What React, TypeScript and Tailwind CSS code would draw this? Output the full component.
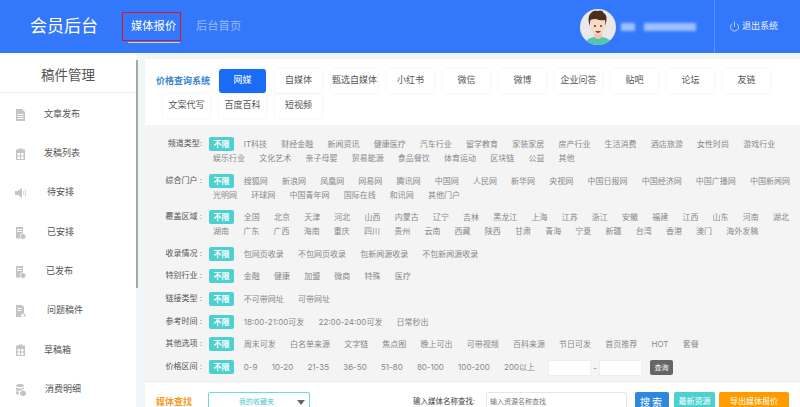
import { Power } from "lucide-react";

type Row = { label: string; items: string[] };

const tabsTop = ["网媒", "自媒体", "甄选自媒体", "小红书", "微信", "微博", "企业问答", "贴吧", "论坛", "友链"];
const tabsBottom = ["文案代写", "百度百科", "短视频"];

const rows: Row[] = [
  { label: "频道类型:", items: ["IT科技", "财经金融", "新闻资讯", "健康医疗", "汽车行业", "留学教育", "家装家居", "房产行业", "生活消费", "酒店旅游", "女性时尚", "游戏行业", "娱乐行业", "文化艺术", "亲子母婴", "贸易能源", "食品餐饮", "体育运动", "区块链", "公益", "其他"] },
  { label: "综合门户 :", items: ["搜狐网", "新浪网", "凤凰网", "网易网", "腾讯网", "中国网", "人民网", "新华网", "央视网", "中国日报网", "中国经济网", "中国广播网", "中国新闻网", "光明网", "环球网", "中国青年网", "国际在线", "和讯网", "其他门户"] },
  { label: "覆盖区域 :", items: ["全国", "北京", "天津", "河北", "山西", "内蒙古", "辽宁", "吉林", "黑龙江", "上海", "江苏", "浙江", "安徽", "福建", "江西", "山东", "河南", "湖北", "湖南", "广东", "广西", "海南", "重庆", "四川", "贵州", "云南", "西藏", "陕西", "甘肃", "青海", "宁夏", "新疆", "台湾", "香港", "澳门", "海外发稿"] },
  { label: "收录情况 :", items: ["包网页收录", "不包网页收录", "包新闻源收录", "不包新闻源收录"] },
  { label: "特别行业 :", items: ["金融", "健康", "加盟", "微商", "特殊", "医疗"] },
  { label: "链接类型 :", items: ["不可带网址", "可带网址"] },
  { label: "参考时间 :", items: ["18:00-21:00可发", "22:00-24:00可发", "日常秒出"] },
  { label: "其他选项 :", items: ["周末可发", "白名单来源", "文字链", "焦点图", "晚上可出", "可带视频", "百科来源", "节日可发", "首页推荐", "HOT", "套餐"] },
  { label: "价格区间 :", items: ["0-9", "10-20", "21-35", "36-50", "51-80", "80-100", "100-200", "200以上"] },
];

const menu = [
  { name: "文章发布", icon: "doc", indent: "ml-[18px]" },
  { name: "发稿列表", icon: "grid", indent: "ml-[18px]" },
  { name: "待安排", icon: "horn", indent: "ml-[21px]" },
  { name: "已安排", icon: "check", indent: "ml-[21px]" },
  { name: "已发布", icon: "check", indent: "ml-[20px]" },
  { name: "问题稿件", icon: "issue", indent: "ml-[21px]" },
  { name: "草稿箱", icon: "grid", indent: "ml-[18px]" },
  { name: "消费明细", icon: "coin", indent: "ml-[19px]" },
];

function MenuIcon({ kind }: { kind: string }) {
  return (
    <svg width="11" height="12" viewBox="0 0 11 12" className="shrink-0" fill="#c4c4c4">
      {kind === "doc" && <path d="M1 0h6l3 3v9H1zM2.5 5v1h6V5zm0 2v1h6V7zm0 2v1h6V9z" fillRule="evenodd" />}
      {kind === "grid" && <path d="M1 1.500h2.500V.5h4v1H10V12H1zM2.500 5v2.500h2.500V5zm3.500 0v2.500h2.500V5zM2.500 8.500V11h2.500V8.500zm3.500 0V11h2.500V8.500z" fillRule="evenodd" />}
      {kind === "horn" && <path d="M0 4h3l4-3v10L3 8H0zM8 4.500q1 1.500 0 3l.6.400q1.200-1.900 0-3.800zM9.500 3q2 3 0 6l.6.400q2.200-3.400 0-6.800z" />}
      {kind === "check" && <path d="M1 0h7v6.200A3 3 0 0 0 5 9.500q0 1 .5 2H1zM2 2v1h5V2zm0 2v1h5V4zM8 7a2.500 2.500 0 1 1 0 5 2.500 2.500 0 0 1 0-5z" fillRule="evenodd" />}
      {kind === "issue" && <path d="M1 0h6l2 2v5.500L6 10l1 2H1zM2.500 3v1h4V3zm0 2v1h4V5zM9 8l2 3-1 1-2-3z" fillRule="evenodd" />}
      {kind === "coin" && <path d="M1 1.500C1 .5 3 0 5 0s4 .5 4 1.500S7 3 5 3 1 2.500 1 1.500zM1 3.500Q3 4.500 5 4.500T9 3.500V5Q6 5.500 4.500 7 2 7 1 6zM1 7q1.500.8 3 .8-.5 1.400 0 3Q2 10.600 1 10zM8 6.500a3 2.800 0 1 1-.01 0z" />}
    </svg>
  );
}

function Avatar() {
  return (
    <svg width="36" height="36" viewBox="0 0 36 36" className="shrink-0">
      <defs>
        <clipPath id="face-clip">
          <circle cx="18" cy="18" r="18" />
        </clipPath>
      </defs>
      <g clipPath="url(#face-clip)">
        <rect width="36" height="36" fill="#e9e9e9" />
        <path d="M5 36q1-7 9-8h8q9 1 10 8z" fill="#57c4ae" />
        <path d="M14 24h8v4q-4 4-8 0z" fill="#f1c4ad" />
        <ellipse cx="18" cy="16" rx="7.500" ry="10" fill="#f7d9c6" />
        <circle cx="15" cy="17" r="0.900" fill="#3a2a20" />
        <circle cx="21" cy="17" r="0.900" fill="#3a2a20" />
        <path d="M15 22q3 4 6 0z" fill="#a8382c" />
        <path d="M9.500 17Q7 7 11 4q2-3 7-2 2-1 4 0 2 .5 1 1.500 4 2 3.500 7L25.500 17 25 11q-5 1-9-1-4 0-5.500 1z" fill="#4b2f1d" />
      </g>
    </svg>
  );
}

function Tab({ name, active }: { name: string; active?: boolean }) {
  return (
    <button
      className={`h-[24px] w-[47px] whitespace-nowrap rounded-[3px] text-[9px] shadow-[0_0_3px_rgba(0,0,0,0.08)] ${
        active ? "bg-[#1a6cf6] text-white" : "bg-white text-[#555555]"
      }`}
    >
      {name}
    </button>
  );
}

export default function App() {
  return (
    <div className="flex h-[407px] w-[800px] flex-col overflow-hidden bg-[#f1f7f9] font-['Liberation_Sans','Noto_Sans_CJK_SC',sans-serif]">
      <header className="flex h-[53px] shrink-0 items-center bg-[#3377fb] text-white">
        <div className="ml-[30px] w-[92px] text-[17px]">会员后台</div>
        <div className="relative flex h-[29px] w-[59px] items-center border border-[#e0141e] pl-[8px] text-[11.300px]">
          媒体报价
          <span className="absolute -bottom-[3px] left-[5px] h-px w-[52px] bg-white/70" />
        </div>
        <div className="ml-[15px] text-[11.300px] text-white/50">后台首页</div>
        <div className="ml-auto flex h-full items-center">
          <Avatar />
          <div className="ml-[5px] flex h-[8px] w-[75px] gap-[9px] blur-[1.500px]">
            <div className="w-[14px] bg-[#9dc0ff]" />
            <div className="w-[52px] bg-[#9dc0ff]" />
          </div>
          <div className="ml-[18px] flex h-full items-center border-l border-[#5c93fb] pl-[14px] pr-[22px] text-[9px] text-white/90">
            <Power size={11} strokeWidth={1.500} className="mr-[2px]" />
            退出系统
          </div>
        </div>
      </header>

      <div className="flex min-h-0 flex-1">
        <aside className="w-[136px] shrink-0 bg-white">
          <div className="flex h-[40px] items-center justify-center border-b border-[#eeeeee] pt-[7px] text-[13.500px] text-[#555555]">稿件管理</div>
          <ul className="pt-[2px]">
            {menu.map((m) => (
              <li key={m.name} className="flex h-[39.300px] items-center pl-[15px] text-[9px] text-[#555555]">
                <MenuIcon kind={m.icon} />
                <span className={m.indent}>{m.name}</span>
              </li>
            ))}
          </ul>
        </aside>
        <div className="w-[9px] shrink-0 pt-[7px]">
          <div className="h-[228px] w-[2px] bg-[#a9a9a9]" />
        </div>

        <main className="min-w-0 flex-1 pt-[6px]">
          <section className="h-[66px] bg-white pl-[11px] pt-[10px]">
            <div className="flex">
              <div className="w-[63px] shrink-0 pt-[6px] text-[9px] font-bold leading-[12px] text-[#3a86d0]">价格查询系统</div>
              <div className="flex gap-x-[9px]">
                {tabsTop.map((t, i) => (
                  <Tab key={t} name={t} active={i === 0} />
                ))}
              </div>
            </div>
            <div className="ml-[7px] mt-[1px] flex gap-x-[9px]">
              {tabsBottom.map((t) => (
                <Tab key={t} name={t} />
              ))}
            </div>
          </section>

          <section className="mt-[3px] h-[254px] border-b border-[#ececec] bg-[#f4f4f4] pt-[9px]">
            {rows.map((r) => (
              <div key={r.label} className="mb-[8.600px] flex">
                <div className="w-[57px] shrink-0 whitespace-nowrap text-right text-[8px] leading-[14px] text-[#555555]">{r.label}</div>
                <div className="ml-[4px] flex min-w-0 flex-1 flex-wrap font-['Inter','Noto_Sans_CJK_SC',sans-serif] text-[8px] leading-[14px] text-[#888888]">
                  <span className="ml-[3px] mr-[2.700px] h-[14px] w-[25px] rounded-[2px] bg-[#4dd0d0] text-center font-bold text-white">不限</span>
                  {r.items.map((it) => (
                    <span key={it} className="whitespace-nowrap px-[7.100px]">{it}</span>
                  ))}
                  {r.label.startsWith("价格") && (
                    <div className="ml-[6px] flex items-center">
                      <input className="h-[16px] w-[43px] border border-[#eeeeee] bg-white" />
                      <span className="w-[8px] text-center">-</span>
                      <input className="h-[16px] w-[43px] border border-[#eeeeee] bg-white" />
                      <span className="ml-[8px] h-[15px] w-[23px] rounded-[2px] bg-[#666666] text-center text-[7px] leading-[15px] text-white">查询</span>
                    </div>
                  )}
                </div>
              </div>
            ))}
          </section>

          <section className="flex h-[40px] items-start bg-white pl-[11px] pt-[10px]">
            <div className="w-[52px] pt-[3px] text-[9px] font-bold leading-[14px] text-[#f79a1e]">媒体查找</div>
            <div className="flex h-[20px] w-[102px] items-center rounded-[2px] border border-[#6fdada] pl-[30px] text-[7px] text-[#4dc8c8]">
              我的收藏夹
              <span className="ml-[23px] h-0 w-0 border-x-[4px] border-t-[5px] border-x-transparent border-t-[#666666]" />
            </div>
            <div className="ml-[103px] w-[73px] text-[7.500px] leading-[20px] text-[#444444]">输入媒体名称查找:</div>
            <div className="flex h-[20px] w-[141px] items-center rounded-[2px] border border-[#e6e6e6] pl-[3px] text-[7px] text-[#777777]">输入资源名称查找</div>
            <button className="ml-[8px] h-[20px] w-[34px] rounded-[2px] bg-[#2f88dc] text-[10px] tracking-[2px] text-white">搜索</button>
            <button className="ml-[5px] h-[20px] w-[41px] rounded-[2px] bg-[#4dd0d0] text-[8px] text-white">最新资源</button>
            <button className="ml-[4px] h-[20px] w-[70px] rounded-[2px] bg-[#ff9c00] text-[8px] text-white">导出媒体报价</button>
          </section>
        </main>
      </div>
    </div>
  );
}
